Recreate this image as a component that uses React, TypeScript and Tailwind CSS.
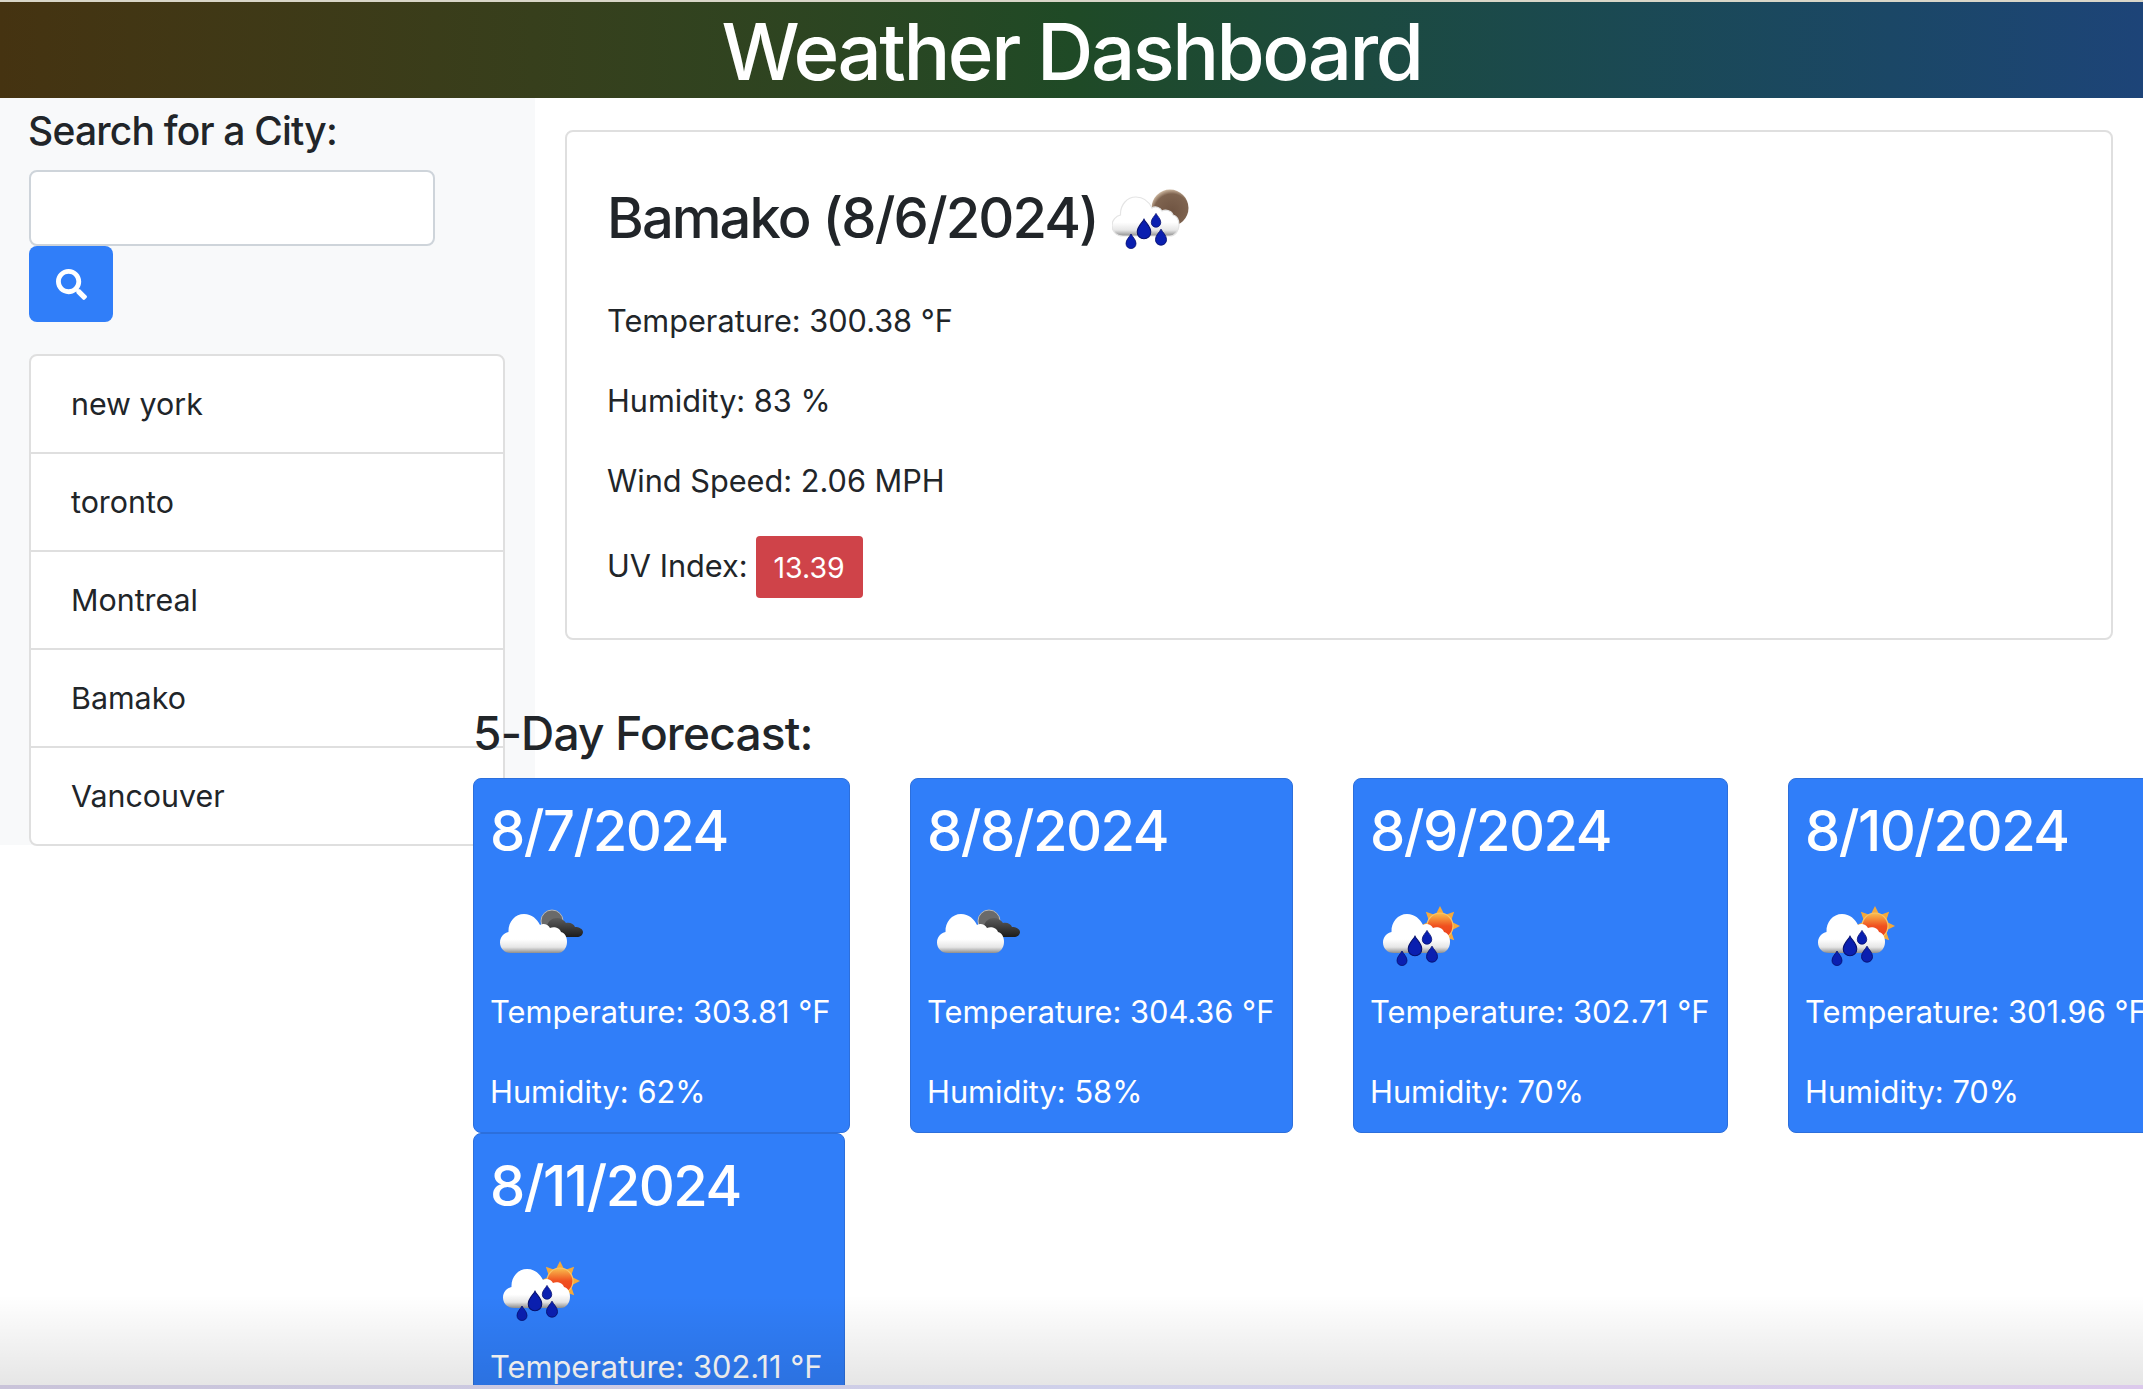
import { FaSearch } from "react-icons/fa";

const cloudPath =
  "M11 54C4 54 0 49 0 43.5C0 38 4 34 8.5 33C8 23 15 15 24 15C32 15 37 20 40 26C43 24 48 25 50 29C54 27 60 29 61 33C65 34 67 38 67 43C67 49 63 54 58 54Z";

function Drop({ x, y, s = 1 }: { x: number; y: number; s?: number }) {
  return (
    <path
      transform={`translate(${x} ${y}) scale(${s})`}
      d="M0 -8C1.5 -5 5 -2.5 5 1.5C5 4.5 2.8 6.5 0 6.5C-2.8 6.5 -5 4.5 -5 1.5C-5 -2.5 -1.5 -5 0 -8Z"
      fill="#0a1fb0"
      stroke="#06106e"
      strokeWidth="0.8"
    />
  );
}

function Defs() {
  return (
    <defs>
      <linearGradient id="cloudWhite" x1="0" y1="0" x2="0" y2="1">
        <stop offset="0.65" stopColor="#ffffff" />
        <stop offset="0.85" stopColor="#e6e6e6" />
        <stop offset="1" stopColor="#8f8f8f" />
      </linearGradient>
      <linearGradient id="cloudDark" x1="0" y1="0" x2="0" y2="1">
        <stop offset="0" stopColor="#5c5c5c" />
        <stop offset="1" stopColor="#1c1c1c" />
      </linearGradient>
      <radialGradient id="moonBrown" cx="0.55" cy="0.6" r="0.6">
        <stop offset="0" stopColor="#6f5442" />
        <stop offset="0.8" stopColor="#7f6450" />
        <stop offset="1" stopColor="#c9b39c" />
      </radialGradient>
      <linearGradient id="sunDisk" x1="0" y1="0" x2="0" y2="1">
        <stop offset="0" stopColor="#f9c04e" />
        <stop offset="0.5" stopColor="#f0501f" />
        <stop offset="1" stopColor="#ec3f1c" />
      </linearGradient>
    </defs>
  );
}

function Rain() {
  return (
    <>
      <Drop x={19} y={60} s={1} />
      <Drop x={32} y={48} s={1.35} />
      <Drop x={44} y={39} s={0.95} />
      <Drop x={49} y={56} s={1.1} />
    </>
  );
}

// openweather style icons, drawn by hand
function WeatherIcon({ kind }: { kind: "moonrain" | "sunrain" | "clouds" }) {
  return (
    <svg viewBox="0 0 90 70" width="90" height="70" className={`block blur-[0.5px] ${kind === "sunrain" ? "ml-[3px]" : "ml-0"}`}>
      <Defs />
      {kind === "moonrain" && <circle cx="58" cy="26" r="18.5" fill="url(#moonBrown)" />}
      {kind === "sunrain" && (
        <g>
          {[0, 45, 90, 135, 180, 225, 270, 315].map((a) => (
            <path
              key={a}
              transform={`translate(57 27) rotate(${a})`}
              d="M-4 -12L0 -20L4 -12Z"
              fill="#f5a93a"
            />
          ))}
          <circle cx="57" cy="27" r="13" fill="url(#sunDisk)" stroke="#f8c46a" strokeWidth="1.2" />
        </g>
      )}
      {kind === "clouds" && (
        <g>
          <circle cx="52" cy="22" r="11" fill="#6a6a6a" stroke="#b9b9b9" strokeWidth="1" />
          <path
            d="M48 38C43 38 41 35 41 32C41 29 44 27 47 27C48 22 52 19 57 19C61 19 64 21 66 24C70 23 74 25 75 28C79 28 83 30 83 33C83 36 80 38 77 38Z"
            fill="url(#cloudDark)"
          />
        </g>
      )}
      <path d={cloudPath} fill="url(#cloudWhite)" stroke={kind === "moonrain" ? "#e4e4e4" : "none"} strokeWidth="1.2" />
      {kind !== "clouds" && <Rain />}
    </svg>
  );
}

const days = [
  { date: "8/7/2024", temp: "303.81", hum: "62", icon: "clouds", w: "w-[377px]", ml: "ml-0" },
  { date: "8/8/2024", temp: "304.36", hum: "58", icon: "clouds", w: "w-[383px]", ml: "ml-[60px]" },
  { date: "8/9/2024", temp: "302.71", hum: "70", icon: "sunrain", w: "w-[375px]", ml: "ml-[60px]" },
  { date: "8/10/2024", temp: "301.96", hum: "70", icon: "sunrain", w: "w-[380px]", ml: "ml-[60px]" },
  { date: "8/11/2024", temp: "302.11", hum: "68", icon: "sunrain", w: "w-[372px]", ml: "ml-0" },
] as const;

const cities = ["new york", "toronto", "Montreal", "Bamako", "Vancouver"];

export default function App() {
  return (
    <div className="relative h-[1389px] overflow-hidden bg-white font-['Inter',sans-serif] text-[#212529]">
      {/* header */}
      <header className="h-[98px] border-t-2 border-[#d9d6c8] bg-gradient-to-r from-[#453311] via-[#1f4a26] to-[#1d4478] text-center text-[78px] leading-[100px] font-medium tracking-[-2.5px] text-white">
        Weather Dashboard
      </header>

      <div className="flex items-start">
        {/* sidebar */}
        <aside className="h-[747px] w-[535px] shrink-0 bg-[#f8f9fa] pl-[29px] pr-[30px]">
          <div className="-ml-px h-[72px] pt-[11px] text-[39px] leading-[44px] font-medium tracking-[-0.8px]">
            Search for a City:
          </div>
          <input className="block h-[76px] w-[406px] rounded-lg border-2 border-[#ced4da] bg-white" />
          <button className="flex h-[76px] w-[84px] items-center justify-center rounded-lg bg-[#307ef9] text-white">
            <FaSearch className="h-[31px] w-[31px]" />
          </button>
          <ul className="mt-[32px] w-[476px] rounded-lg border-2 border-[#dfdfdf] bg-white">
            {cities.map((c, i) => (
              <li
                key={c}
                className={`flex items-center pt-[2px] pl-[40px] text-[30.4px] ${i < 4 ? "h-[98px] border-b-2 border-[#dfdfdf]" : "h-[96px]"}`}
              >
                {c}
              </li>
            ))}
          </ul>
        </aside>

        {/* main column */}
        <main className="relative min-w-0 flex-1 pt-[32px] pr-[30px] pl-[30px]">
          <section className="h-[510px] rounded-lg border-2 border-[#dfdfdf] bg-white pt-[49px] pl-[40px]">
            <div className="flex h-[74px] items-center">
              <h2 className="text-[56px] font-medium tracking-[-1.9px] whitespace-nowrap">Bamako (8/6/2024)</h2>
              <div className="mt-[-2px] ml-[14px]">
                <WeatherIcon kind="moonrain" />
              </div>
            </div>
            <div className="mt-[49px] flex flex-col gap-[47px] text-[30.7px] leading-[33px]">
              <p>Temperature: 300.38 °F</p>
              <p>Humidity: 83 %</p>
              <p>Wind Speed: 2.06 MPH</p>
              <p className="-mt-[8px] flex items-center">
                <span className="-mt-[3px]">UV Index:</span>
                <span className="ml-[8px] flex h-[62px] w-[107px] items-center justify-center rounded bg-[#cf4349] text-[28.5px] text-white">
                  13.39
                </span>
              </p>
            </div>
          </section>

          {/* forecast hangs left over the sidebar */}
          <section className="relative -ml-[92px] mt-[68px] w-[1760px]">
            <h3 className="h-[70px] text-[46px] leading-[50px] font-medium tracking-[-0.8px]">5-Day Forecast:</h3>
            <div className="flex flex-wrap">
              {days.map((d) => (
                <div
                  key={d.date}
                  className={`h-[355px] rounded-lg border border-[#2c6fdc] bg-[#307ef9] pt-[15px] pl-[16px] text-white ${d.w} ${d.ml}`}
                >
                  <div className="text-[56px] leading-[74px] font-medium tracking-[-1.5px] whitespace-nowrap">{d.date}</div>
                  <div className="mt-[31px] mb-[26px] ml-[10px]">
                    <WeatherIcon kind={d.icon} />
                  </div>
                  <p className="text-[30.8px] leading-[33px] whitespace-nowrap">Temperature: {d.temp} °F</p>
                  <p className="mt-[47px] text-[30.8px] leading-[33px] whitespace-nowrap">Humidity: {d.hum}%</p>
                </div>
              ))}
            </div>
          </section>
        </main>
      </div>

      {/* browser window fade at the bottom */}
      <div className="pointer-events-none absolute inset-x-0 bottom-[4px] h-[90px] bg-gradient-to-b from-transparent to-black/10" />
      <div className="absolute inset-x-0 bottom-0 h-[4px] bg-gradient-to-r from-[#c9c3d9] via-[#cfd0ea] to-[#dcc9ec]" />
    </div>
  );
}
